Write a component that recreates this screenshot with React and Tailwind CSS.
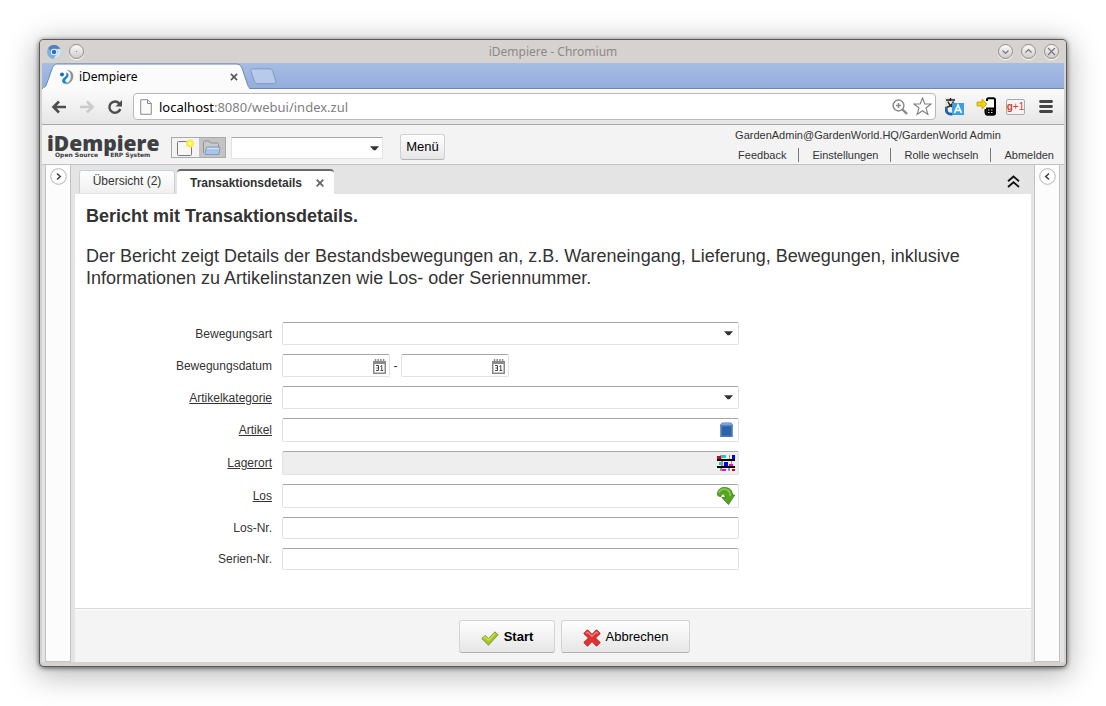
import React, { useState } from 'react';

const uiFont = "font-['Noto_Sans','Open_Sans',sans-serif]";

function WindowButton({ label, children }) {
  return (
    <button
      aria-label={label}
      className="size-[15px] rounded-full border border-[#8f8c8a] bg-linear-to-b from-[#fafafa] to-[#cfccca] flex items-center justify-center shadow-[0_1px_1px_#ffffff]"
    >
      <svg className="size-[13px] shrink-0" viewBox="0 0 13 13" fill="none" stroke="#777" strokeWidth="1.2">
        {children}
      </svg>
    </button>
  );
}

function TitleBar() {
  return (
    <div className="h-[23px] shrink-0 flex items-center pl-[6px] pr-[7px] bg-[#d6d2d0]">
      <svg className="size-4" viewBox="0 0 16 16">
        <circle cx="8" cy="8" r="7" fill="#7fb0e0" />
        <path d="M8 1a7 7 0 0 1 6.2 3.8H8a3.3 3.3 0 0 0-3.2 2.4L2.3 4A7 7 0 0 1 8 1z" fill="#4d80bd" />
        <path d="M14.3 5a7 7 0 0 1-6.6 10l3-5.2A3.3 3.3 0 0 0 10.3 5z" fill="#cfe3f6" />
        <circle cx="8" cy="8" r="3.2" fill="#e8f1fa" />
        <circle cx="8" cy="8" r="2.2" fill="#2f6db5" />
      </svg>
      <div className="ml-[7px]">
        <WindowButton label="Fenstermenü">
          <circle cx="6.5" cy="6.5" r="0.6" fill="#777" stroke="none" />
        </WindowButton>
      </div>
      <div className={`${uiFont} flex-1 text-center text-xs text-[#8b8885] pl-6`}>iDempiere - Chromium</div>
      <div className="flex gap-2">
        <WindowButton label="Minimieren">
          <path d="M3.5 5.5l3 3 3-3" />
        </WindowButton>
        <WindowButton label="Maximieren">
          <path d="M3.5 7.5l3-3 3 3" />
        </WindowButton>
        <WindowButton label="Schließen">
          <path d="M3 3l7 7M10 3l-7 7" />
        </WindowButton>
      </div>
    </div>
  );
}

function BrowserTabs() {
  return (
    <div className="h-[26px] shrink-0 mx-[2px] flex bg-linear-to-b from-[#a5bce4] to-[#94addb] border-b border-[#6d88ae]">
      <div className="relative w-[208px] h-[26px]">
        <svg className="absolute inset-0 w-full h-full" viewBox="0 0 208 26" preserveAspectRatio="none">
          <path
            d="M0 25.5C3 25 4 23 5 20L10 6C11.5 2 12.5 1 16 1H194C197 1 198.5 2 200 5L205 20C206 23 207 25 208 25.5V26H0z"
            fill="#fbfbfb"
            stroke="#6d88ae"
          />
          <path d="M1 25.5H207" stroke="#fbfbfb" strokeWidth="1.5" />
        </svg>
        <div className={`${uiFont} relative flex h-full items-center pl-[17px] pr-3 pt-[2px] text-xs text-black`}>
          <svg className="size-4 shrink-0" viewBox="0 0 16 16">
            <path d="M7.5 .8C12 1 14.8 4 14.3 8c-.5 4-3.3 7-8 7.5C10 13.5 11.8 11 11.8 7.5 11.8 4.5 10.5 2 7.5 .8z" fill="#8e9499" />
            <circle cx="3" cy="5.5" r="2" fill="#1e6fae" />
            <path d="M7 3.5c2.8.5 3.3 3.3 1.7 5-1.5 1.5-2.7 2.3-2.3 3.8.4 1.2 1.7 1.5 3 1-1.5 2.1-5 1.9-6-.2-1-2.4.6-4 2.4-5.2C7.3 7 8 5.3 7 3.5z" fill="#1e86c8" />
          </svg>
          <span className="ml-1 flex-1">iDempiere</span>
          <button aria-label="Tab schließen">
            <svg className="size-2" viewBox="0 0 9 9" stroke="#555" strokeWidth="1.8">
              <path d="M1 1l7 7M8 1L1 8" />
            </svg>
          </button>
        </div>
      </div>
      <button aria-label="Neuer Tab" className="self-start mt-[5px]">
        <svg className="w-[27px] h-[17px]" viewBox="0 0 27 17">
          <path d="M2.5.8H19c2 0 3 .8 3.7 2.4l3 9.5c.6 2-.2 3-2 3H8c-2 0-3-.8-3.7-2.5L1 3.5C.5 1.8 1 .8 2.5.8z" fill="#b7caea" stroke="#7e97c0" />
        </svg>
      </button>
    </div>
  );
}

function AddressBar() {
  const [url] = useState({ host: 'localhost', rest: ':8080/webui/index.zul' });

  return (
    <div className="h-9 shrink-0 mx-[2px] flex items-center pl-[9px] pr-[11px] bg-linear-to-b from-[#fbfbfb] to-[#e6e6e6] border-b border-[#a8a8a8]">
      <button aria-label="Zurück">
        <svg className="size-4" viewBox="0 0 16 16" fill="none" stroke="#4d4d4d" strokeWidth="2.6">
          <path d="M15 8H3M8 2.5L2.5 8 8 13.5" />
        </svg>
      </button>
      <button aria-label="Vorwärts" className="ml-3">
        <svg className="size-4" viewBox="0 0 16 16" fill="none" stroke="#cbcbcb" strokeWidth="2.6">
          <path d="M1 8h12M8 2.5L13.5 8 8 13.5" />
        </svg>
      </button>
      <button aria-label="Neu laden" className="ml-3">
        <svg className="size-4" viewBox="0 0 16 16">
          <path d="M12.3 4.5A5.6 5.6 0 1 0 13.3 10" fill="none" stroke="#4d4d4d" strokeWidth="2.5" />
          <path d="M15 1v6.5H8.5z" fill="#4d4d4d" />
        </svg>
      </button>
      <div className="ml-[10px] mr-[9px] flex-1 h-[27px] flex items-center rounded-sm border border-[#b8b8b8] bg-white px-[6px]">
        <svg className="w-3 h-4" viewBox="0 0 12 16" fill="#fafafa" stroke="#8a8a8a">
          <path d="M.7.7H7.5L11.3 4.5V15.3H.7zM7.5.7V4.5H11.3" />
        </svg>
        <div className={`${uiFont} ml-[7px] flex-1 text-[13px] leading-4 text-[#808080]`}>
          <span className="text-black">{url.host}</span>
          {url.rest}
        </div>
        <svg className="size-4" viewBox="0 0 16 16" fill="none" stroke="#8a8a8a" strokeWidth="1.5">
          <circle cx="6.5" cy="6.5" r="5.4" />
          <path d="M6.5 4v5M4 6.5h5" />
          <path d="M10.5 10.5L15 15" strokeWidth="2.4" />
        </svg>
        <svg className="ml-[5px] size-[19px] -mr-[3px]" viewBox="0 0 19 19" fill="#fff" stroke="#808080" strokeWidth="1.1">
          <path d="M9.5 1l2.3 6H18l-5 4 1.9 6.5-5.4-3.8-5.4 3.8L6 11 1 7h6.2z" />
        </svg>
      </div>
      <svg className="size-[19px]" viewBox="0 0 19 19">
        <rect x="0" y="1" width="10" height="10" fill="#e8e4d8" />
        <path d="M1 3h9M5.5 1v3M3 4.5c1 3 3 5 6 6M8.5 4.5c-1 3-4 5-7 6" stroke="#222" strokeWidth="1.4" fill="none" />
        <path d="M1.5 10c-1 5 1 7.500 6 7" stroke="#1e62ab" strokeWidth="2.8" fill="none" />
        <rect x="7" y="6" width="12" height="12" fill="#3ba0e2" />
        <path d="M9.5 16L13 8l3.5 8M10.7 13.3h4.6" fill="none" stroke="#fff" strokeWidth="1.7" />
      </svg>
      <svg className="ml-3 w-5 h-[19px]" viewBox="0 0 20 19">
        <path d="M11 4V3c0-1 .6-1.700 1.700-1.700h4.600c1 0 1.700.7 1.700 1.700v13c0 1-.7 1.700-1.700 1.700h-5.600C10 17.700 9.500 16.500 9.500 15v-3" fill="#fff" stroke="#000" strokeWidth="2" />
        <path d="M10 10.500h9v7h-8.500z" />
        <path d="M12 13h1.500M15 13h1.500M12 15.500h1.500M15 15.500h1.500" stroke="#ddd" />
        <path d="M1 5h5V2l5 5-5 5V9H1z" fill="#f2d300" stroke="#b89a00" strokeWidth=".7" />
      </svg>
      <div className="ml-[10px] w-[19px] h-4 flex items-center justify-center rounded-[2px] border border-[#aaa] bg-[#f4f4f4] font-['Liberation_Sans',sans-serif] text-[10px] leading-none text-[#d5402c]">
        <b>g</b>+1
      </div>
      <button aria-label="Menü" className="ml-[14px]">
        <svg className="w-[14px] h-[13px]" viewBox="0 0 14 13" stroke="#444" strokeWidth="2.8" strokeLinecap="round">
          <path d="M1.5 1.5h11M1.5 6.5h11M1.5 11.5h11" />
        </svg>
      </button>
    </div>
  );
}

function Caret() {
  return (
    <svg className="w-[9px] h-[5px]" viewBox="0 0 9 5" fill="#333">
      <path d="M0 .3H9L5.5 4.3h-2z" />
    </svg>
  );
}

function AppHeader() {
  const links = ['Feedback', 'Einstellungen', 'Rolle wechseln', 'Abmelden'];

  return (
    <header className="h-10 shrink-0 flex bg-[#f3f3f3] border-b border-[#c2c2c2]">
      <div className="w-[113px] ml-[5px] pt-[10px] text-[#3f4042]">
        <div className="font-['Open_Sans',sans-serif] text-[21px] leading-4 font-extrabold">iDempiere</div>
        <div className="pl-2 flex gap-3 font-['DejaVu_Sans',sans-serif] text-[6px] leading-[8px] font-bold whitespace-nowrap">
          <span>Open Source</span>
          <span>ERP System</span>
        </div>
      </div>
      <div className="ml-[11px] mt-3 flex h-[21px] w-[55px] border border-[#a9a9a9]">
        <button aria-label="Neu" className="flex-1 flex items-center justify-center">
          <svg className="w-[18px] h-[18px]" viewBox="0 0 18 18">
            <rect x="1.5" y="2.5" width="14" height="14" rx="1" fill="#f7f7f7" stroke="#777" />
            <circle cx="14" cy="4.5" r="4" fill="#f7ef3e" />
            <circle cx="14" cy="4.5" r="1.5" fill="#fffbc8" />
          </svg>
        </button>
        <button aria-label="Öffnen" className="flex-1 flex items-center justify-center bg-[#c3c3c3]">
          <svg className="w-[19px] h-[17px]" viewBox="0 0 19 17">
            <path d="M1.5 14V3.5c0-1 .5-1.5 1.5-1.5h4l1.5 2H15c1 0 1.5.5 1.5 1.5V8" fill="#c9c9c9" stroke="#929292" />
            <path d="M4.5 8H18l-1 7.5H3z" fill="#a9c6ea" stroke="#7f9dc4" />
            <path d="M5 9.5h12" stroke="#d4e3f5" />
          </svg>
        </button>
      </div>
      <div className="relative ml-[5px] mt-3 w-[152px] h-[22px]">
        <select
          aria-label="Suche"
          className="block appearance-none w-full h-full bg-white border border-[#e3e3e3] border-t-[#a9a9a9] px-1 text-xs outline-none"
        />
        <span className="absolute inset-y-0 right-1 flex items-center pointer-events-none">
          <Caret />
        </span>
      </div>
      <button className="ml-[17px] mt-[9px] h-[26px] w-[45px] rounded-[3px] border border-[#d0d0d0] border-b-[#b4b4b4] bg-linear-to-b from-white to-[#e6e6e6] text-[13px] leading-4 text-black">
        Menü
      </button>
      <div className="ml-auto pr-[10px] pt-[3px] text-[11px] leading-[14px] text-[#333]">
        <div className="-ml-[3px]">GardenAdmin@GardenWorld.HQ/GardenWorld Admin</div>
        <nav className="mt-[6px] flex">
          {links.map((link, i) => (
            <a
              key={link}
              href="#"
              className={i === 0 ? '' : 'ml-3 border-l border-[#777] pl-[13px]'}
            >
              {link}
            </a>
          ))}
        </nav>
      </div>
    </header>
  );
}

function SidePanel({ direction }) {
  return (
    <aside className="w-[26px] shrink-0 border border-t-0 border-[#c2c2c2] bg-[#fcfcfc] flex justify-center items-start pt-[3px]">
      <button aria-label={direction === 'right' ? 'Aufklappen' : 'Zuklappen'}>
        <svg className="size-[17px]" viewBox="0 0 17 17" fill="none">
          <circle cx="8.5" cy="8.5" r="7.8" stroke="#b2b5b5" fill="#fff" />
          <path
            d={direction === 'right' ? 'M7 5.5l3.2 3-3.2 3' : 'M10 5.5l-3.2 3 3.2 3'}
            stroke="#444"
            strokeWidth="1.6"
          />
        </svg>
      </button>
    </aside>
  );
}

function PageTabs() {
  return (
    <div className="h-[29px] shrink-0 flex items-end bg-[#e4e4e4] pl-1 pr-[11px] text-[#333]">
      <button className="h-[23px] w-24 mb-px rounded-t-[3px] border border-b-0 border-[#cfcfcf] border-t-[#c5d3dc] bg-linear-to-b from-white to-[#f0f0f0] text-xs pb-[3px]">
        Übersicht (2)
      </button>
      <div className="ml-[2px] h-[25px] w-[157px] flex items-center justify-between rounded-t-[4px] border-t-2 border-[#6a6a6a] bg-white pl-[13px] pr-[10px] pt-px text-xs font-bold">
        <span>Transaktionsdetails</span>
        <button aria-label="Schließen">
          <svg className="size-2" viewBox="0 0 8 8" stroke="#666" strokeWidth="1.8">
            <path d="M.7.7l6.6 6.6M7.3.7L.7 7.3" />
          </svg>
        </button>
      </div>
      <button aria-label="Kopfbereich einklappen" className="ml-auto mb-[6px]">
        <svg className="w-[13px] h-[13px]" viewBox="0 0 13 13" fill="none" stroke="#111" strokeWidth="1.8">
          <path d="M1 6.3L6.5 1.5 12 6.3M1 12L6.5 7.2 12 12" />
        </svg>
      </button>
    </div>
  );
}

function CalendarIcon() {
  return (
    <svg className="w-[13px] h-4" viewBox="0 0 13 16">
      <path d="M0 3h13v13H0z" fill="#8a8a8a" />
      <path d="M1.5 6h10v8.5h-10z" fill="#fff" />
      <path d="M2.5 1v3M5.2 1v3M7.9 1v3M10.6 1v3" stroke="#8a8a8a" strokeWidth="1.5" />
      <path d="M3 7.5h2.5v5H3M3.5 10h2M7.5 8.5l1.3-1v5M7.5 12.5h2.7" fill="none" stroke="#444" />
    </svg>
  );
}

function ProductIcon() {
  return (
    <svg className="w-[15px] h-4" viewBox="0 0 15 16">
      <path d="M3 .5h9l2 2.500V15H1V3z" fill="#4a7ab8" />
      <path d="M3.2 1h8.600l1.400 2.300H1.800z" fill="#7ba3d6" />
      <path d="M3 4.500h9v9H3z" fill="#2d62a6" />
      <path d="M1.5 4v11M13.5 4v11" stroke="#7095c8" />
    </svg>
  );
}

function LocatorIcon() {
  return (
    <svg className="w-[18px] h-4" viewBox="0 0 18 16" shapeRendering="crispEdges">
      <path d="M3 0h2v4H3zM12 0h1v4h-1zM4 6h2v5H4zM14 6h1v3h-1zM3 12h2v4H3zM11 12h2v4h-2z" fill="#999" />
      <path d="M5 0h4v3H5zM2 7h2v3H2z" fill="#1ec8c8" />
      <path d="M15 0h3v4h-3zM7 7h4v4H7z" fill="#0000f0" />
      <path d="M0 1h4v3H0zM15 14h3v2h-3z" fill="#d00018" />
      <path d="M12 9h4v2h-4zM5 14h4v2H5z" fill="#e010d8" />
      <path d="M0 4h18v2H0zM0 11h18v2H0z" fill="#000" />
    </svg>
  );
}

function LotIcon() {
  return (
    <svg className="w-[18px] h-[18px]" viewBox="0 0 18 18">
      <path
        d="M.4 7.500C.4 3 3.500.4 7.500.4c5 0 8 3.100 8 7.600h2.200L11.500 17.500 4.800 10.500h3.400C8.200 8.200 7.300 7 5.800 7c-1.200 0-1.700.9-1.600 2.300C2.200 9.600.5 9 .4 7.500z"
        fill="#55a522"
        stroke="#3b7d15"
        strokeWidth=".8"
      />
      <path d="M2 6C2.600 3.500 5 2 7.700 2.100c3.800.2 5.600 3 5.600 7.200" fill="none" stroke="#86ca4d" strokeWidth="1.6" />
    </svg>
  );
}

const inputBase =
  'block w-full h-full rounded-[2px] border border-[#e2e2e2] border-t-[#a6a6a6] px-1 text-xs text-[#333] outline-none';

const fields = [
  { id: 'bewegungsart', label: 'Bewegungsart', select: true, size: 'md' },
  { id: 'bewegungsdatum', label: 'Bewegungsdatum', range: true, size: 'md' },
  { id: 'artikelkategorie', label: 'Artikelkategorie', select: true, linked: true, size: 'md' },
  { id: 'artikel', label: 'Artikel', icon: <ProductIcon />, linked: true, size: 'lg' },
  { id: 'lagerort', label: 'Lagerort', icon: <LocatorIcon />, linked: true, readOnly: true, size: 'lg' },
  { id: 'los', label: 'Los', icon: <LotIcon />, linked: true, size: 'lg' },
  { id: 'losnr', label: 'Los-Nr.', size: 'sm' },
  { id: 'seriennr', label: 'Serien-Nr.', size: 'sm' },
];

const heights = { sm: 'h-[22px]', md: 'h-[23px]', lg: 'h-6' };

function DateBox({ id, label }) {
  return (
    <div className="relative w-[108px] h-full">
      <input id={id} aria-label={label} className={inputBase} />
      <button type="button" aria-label="Kalender" className="absolute right-1 inset-y-0 flex items-center">
        <CalendarIcon />
      </button>
    </div>
  );
}

function FieldControl({ field }) {
  if (field.range) {
    return (
      <>
        <DateBox id={field.id} label="Bewegungsdatum von" />
        <span className="w-[11px] text-center text-xs">-</span>
        <DateBox id={`${field.id}-bis`} label="Bewegungsdatum bis" />
      </>
    );
  }

  if (field.select) {
    return (
      <div className="relative w-full max-w-[457px] h-full">
        <select id={field.id} className={`${inputBase} appearance-none bg-white`} />
        <span className="absolute inset-y-0 right-[6px] flex items-center pointer-events-none">
          <Caret />
        </span>
      </div>
    );
  }

  return (
    <div className="relative w-full max-w-[457px] h-full">
      <input
        id={field.id}
        readOnly={field.readOnly}
        className={`${inputBase} ${field.readOnly ? 'bg-[#eeeeee]' : 'bg-white'}`}
      />
      {field.icon && (
        <button
          type="button"
          aria-label={`${field.label} auswählen`}
          className="absolute right-0 inset-y-0 w-[26px] flex items-center justify-center"
        >
          {field.icon}
        </button>
      )}
    </div>
  );
}

function FieldRow({ field }) {
  return (
    <div className={`flex items-center ${heights[field.size]}`}>
      <label
        htmlFor={field.id}
        className={`w-[197px] mr-[10px] shrink-0 text-right text-xs ${field.linked ? 'underline underline-offset-1' : ''}`}
      >
        {field.label}
      </label>
      <FieldControl field={field} />
    </div>
  );
}

function ReportForm() {
  const handleSubmit = (e) => {
    e.preventDefault();
  };

  return (
    <form onSubmit={handleSubmit} className="flex-1 flex flex-col bg-white text-[#333]">
      <div className="flex-1 px-[11px] pt-[11px] pb-8 text-[18px] leading-[22px]">
        <h1 className="font-bold">Bericht mit Transaktionsdetails.</h1>
        <p className="mt-[18px] max-w-[900px]">
          Der Bericht zeigt Details der Bestandsbewegungen an, z.B. Wareneingang, Lieferung, Bewegungen, inklusive
          Informationen zu Artikelinstanzen wie Los- oder Seriennummer.
        </p>
        <div className="mt-[33px] -ml-[11px] flex flex-col gap-[9px]">
          {fields.map((field) => (
            <FieldRow key={field.id} field={field} />
          ))}
        </div>
      </div>

      <div className="h-[54px] shrink-0 flex justify-center gap-[6px] border-t border-[#d8d8d8] bg-[#f4f4f4] pt-[11px] pl-[43px] text-[13px] text-black shadow-[inset_0_1px_0_#ffffff]">
        <button
          type="submit"
          className="h-[33px] w-24 flex items-center justify-center gap-[5px] rounded-[3px] border border-[#d4d4d4] border-b-[#b0b0b0] bg-linear-to-b from-[#fefefe] to-[#e6e6e6] font-bold"
        >
          <svg className="w-[18px] h-[15px] mt-1" viewBox="0 0 18 15">
            <path d="M.8 7.500l3.500-3 3.200 3L14 .8l3 3-9.500 10.400z" fill="#a6c52f" stroke="#7f9a1e" />
            <path d="M2.500 7.500l2-1.500 3 3L14 2.500" fill="none" stroke="#cbe05d" strokeWidth="1.3" />
          </svg>
          Start
        </button>
        <button
          type="button"
          className="h-[33px] w-[129px] flex items-center justify-center gap-[5px] rounded-[3px] border border-[#d4d4d4] border-b-[#b0b0b0] bg-linear-to-b from-[#fefefe] to-[#e6e6e6]"
        >
          <svg className="size-[18px] mt-[2px]" viewBox="0 0 18 18">
            <path
              d="M4.5.8L9 5.5 13.5.8l3.7 3.7L12.5 9l4.7 4.5-3.7 3.7L9 12.5l-4.5 4.7L.8 13.5 5.5 9 .8 4.5z"
              fill="#e23232"
              stroke="#b41d1d"
            />
            <path d="M3 4.5L4.5 3 9 7.5 13.5 3 15 4.5" fill="none" stroke="#f58a8a" strokeWidth="1.2" />
          </svg>
          Abbrechen
        </button>
      </div>
    </form>
  );
}

export default function App() {
  return (
    <div className="min-h-screen flex flex-col bg-white p-10 font-['Liberation_Sans',Arial,sans-serif]">
      <div className="flex-1 flex flex-col overflow-hidden rounded-[4px] bg-[#d6d2d0] pb-1 shadow-[0_0_0_1px_#5a5a5a,0_1px_5px_1px_rgba(0,0,0,0.6),0_6px_30px_4px_rgba(0,0,0,0.28)]">
        <TitleBar />
        <BrowserTabs />
        <AddressBar />
        <div className="mx-[2px] flex-1 flex flex-col">
          <AppHeader />
          <div className="flex-1 flex bg-[#e4e4e4] pl-[3px] pr-1">
            <SidePanel direction="right" />
            <main className="flex-1 min-w-0 ml-1 mr-[3px] flex flex-col">
              <PageTabs />
              <ReportForm />
            </main>
            <SidePanel direction="left" />
          </div>
        </div>
      </div>
    </div>
  );
}
